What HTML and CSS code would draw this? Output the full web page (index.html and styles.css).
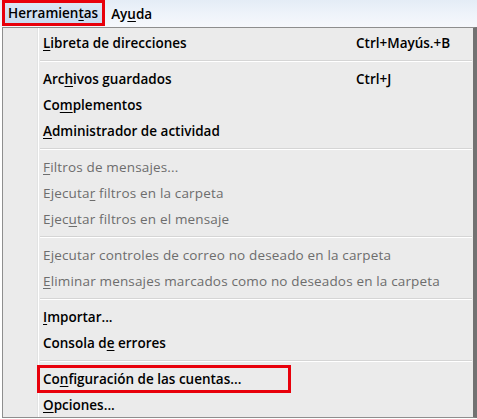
FILE: index.html
```html
<!DOCTYPE html>
<html lang="es">
<head>
<meta charset="utf-8">
<link rel="stylesheet" href="styles.css">
</head>
<body>
<div class="menubar">
  <div class="top-item active"><span class="hl">Herramien<u>t</u>as</span></div>
  <div class="top-item">Ay<u>u</u>da</div>
</div>
<div class="menu">
  <div class="item"><span class="label"><u>L</u>ibreta de direcciones</span><span class="key">Ctrl+Mayús.+B</span></div>
  <div class="sep"></div>
  <div class="item"><span class="label">Arc<u>h</u>ivos guardados</span><span class="key">Ctrl+J</span></div>
  <div class="item"><span class="label">Co<u>m</u>plementos</span></div>
  <div class="item"><span class="label"><u>A</u>dministrador de actividad</span></div>
  <div class="sep"></div>
  <div class="item disabled"><span class="label"><u>F</u>iltros de mensajes...</span></div>
  <div class="item disabled"><span class="label">Ejecuta<u>r</u> filtros en la carpeta</span></div>
  <div class="item disabled"><span class="label">Ejec<u>u</u>tar filtros en el mensaje</span></div>
  <div class="sep"></div>
  <div class="item disabled"><span class="label">E<u>j</u>ecutar controles de correo no deseado en la carpeta</span></div>
  <div class="item disabled"><span class="label"><u>E</u>liminar mensajes marcados como no deseados en la carpeta</span></div>
  <div class="sep"></div>
  <div class="item"><span class="label"><u>I</u>mportar...</span></div>
  <div class="item"><span class="label">Consola d<u>e</u> errores</span></div>
  <div class="sep"></div>
  <div class="item"><span class="label boxed">Co<u>n</u>figuración de las cuentas...</span></div>
  <div class="item"><span class="label"><u>O</u>pciones...</span></div>
</div>
</body>
</html>
```
FILE: styles.css
```css
html, body {
  margin: 0;
  padding: 0;
}
body {
  width: 477px;
  height: 419px;
  overflow: hidden;
  background: #ffffff;
  font-family: "Open Sans", "Noto Sans", sans-serif;
  font-size: 13.5px;
  color: #000;
}
.menubar {
  height: 27px;
  display: flex;
  align-items: stretch;
  background: linear-gradient(#e4ecf6, #eef3fa 50%, #f6f8fc);
}
.top-item {
  display: flex;
  align-items: center;
  padding: 0 6px;
  font-weight: 600;
}
.top-item.active {
  padding: 0 0 1px 2px;
}
.top-item .hl {
  display: flex;
  align-items: center;
  height: 20px;
  padding: 0 4px 0 3px;
  border: 3px solid #e8000b;
  background: linear-gradient(#dde8f5, #c9dbf0);
}
.top-item u, .item u {
  text-decoration-thickness: 1px;
  text-underline-offset: 2px;
}
.menu {
  margin-left: 2px;
  width: 475px;
  height: 391px;
  box-sizing: border-box;
  border: 1px solid #8e8e8e;
  border-right: 4px solid #727272;
  background: #ebebeb linear-gradient(to right, transparent 34px, #e2e3e3 34px, #e2e3e3 35px, #ffffff 35px, #ffffff 36px, transparent 36px);
  padding-top: 2px;
}
.item {
  height: 26px;
  display: flex;
  align-items: center;
  padding-left: 40px;
  padding-right: 12px;
  font-weight: 600;
  white-space: nowrap;
}
.item .label {
  flex: 1;
}
.item .key {
  width: 105px;
}
.item.disabled {
  color: #6d6d6d;
  font-weight: 400;
  letter-spacing: 0.16px;
}
.sep {
  height: 10px;
  margin-left: 37px;
  margin-right: 1px;
  background: linear-gradient(transparent 4px, #d5d5d5 4px, #d5d5d5 5px, #ffffff 5px, #ffffff 6px, transparent 6px);
}
.label.boxed {
  flex: 0 0 auto;
  margin-left: -6px;
  padding: 2px 47px 2px 3px;
  border: 3px solid #e8000b;
}
```
